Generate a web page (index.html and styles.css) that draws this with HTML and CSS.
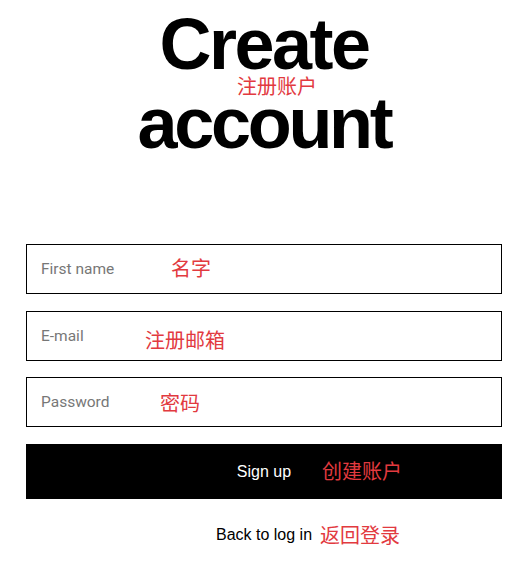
FILE: index.html
```html
<!DOCTYPE html>
<html lang="en">
<head>
<meta charset="utf-8">
<title>Create account</title>
<link rel="stylesheet" href="styles.css">
</head>
<body>
<main class="page">
  <h1 class="title">
    <span class="title-line">Create</span>
    <span class="title-line title-line-2">account</span>
    <span class="note note-title">注册账户</span>
  </h1>
  <form class="form">
    <label class="field">
      <input class="input" type="text" placeholder="First name">
      <span class="note note-name">名字</span>
    </label>
    <label class="field">
      <input class="input" type="email" placeholder="E-mail">
      <span class="note note-email">注册邮箱</span>
    </label>
    <label class="field">
      <input class="input" type="password" placeholder="Password">
      <span class="note note-pass">密码</span>
    </label>
    <button class="submit" type="button">
      <span>Sign up</span>
      <span class="note note-signup">创建账户</span>
    </button>
  </form>
  <div class="back">
    <a class="back-link" href="#">Back to log in</a>
    <span class="note note-back">返回登录</span>
  </div>
</main>
</body>
</html>
```
FILE: styles.css
```css
* { box-sizing: border-box; }
html, body { margin: 0; padding: 0; background: #fff; }
body { font-family: "Liberation Sans", Arial, sans-serif; color: #000; }

.page {
  width: 476px;
  margin-left: 26px;
  padding-top: 5px;
}

.title {
  position: relative;
  margin: 0;
  display: flex;
  flex-direction: column;
  align-items: center;
  font-family: "Liberation Sans", Arial, sans-serif;
  font-weight: 700;
  font-size: 72px;
  line-height: 79px;
  letter-spacing: -2.5px;
}
.title-line-2 { letter-spacing: -3.3px; }

.note {
  position: absolute;
  font-family: "Noto Sans CJK SC", sans-serif;
  font-weight: 400;
  color: #e23a3f;
  font-size: 20px;
  line-height: 24px;
  letter-spacing: 0;
  white-space: nowrap;
}

.note-title { left: 211px; top: 69px; }

.form {
  margin-top: 81px;
  display: flex;
  flex-direction: column;
  gap: 16.7px;
}

.field { position: relative; display: block; }

.input {
  display: block;
  width: 100%;
  height: 50px;
  border: 1.5px solid #000;
  border-radius: 0;
  padding: 0 0 0 14px;
  font-family: Roboto, "Liberation Sans", sans-serif;
  font-size: 15.5px;
  color: #000;
  background: #fff;
  outline: none;
}
.input::placeholder { color: #777; }

.note-name { left: 145px; top: 12px; }
.note-email { left: 119px; top: 17px; }
.note-pass { left: 134px; top: 14px; }

.submit {
  position: relative;
  height: 55px;
  border: 0;
  background: #000;
  color: #fff;
  font-family: "Liberation Sans", Arial, sans-serif;
  font-size: 16px;
  cursor: pointer;
}
.note-signup { left: 296px; top: 15px; }

.back {
  position: relative;
  margin-top: 26px;
  text-align: center;
  font-size: 16px;
  line-height: 20px;
}
.back-link { color: #000; text-decoration: none; }
.note-back { left: 294px; top: -2px; }
```
